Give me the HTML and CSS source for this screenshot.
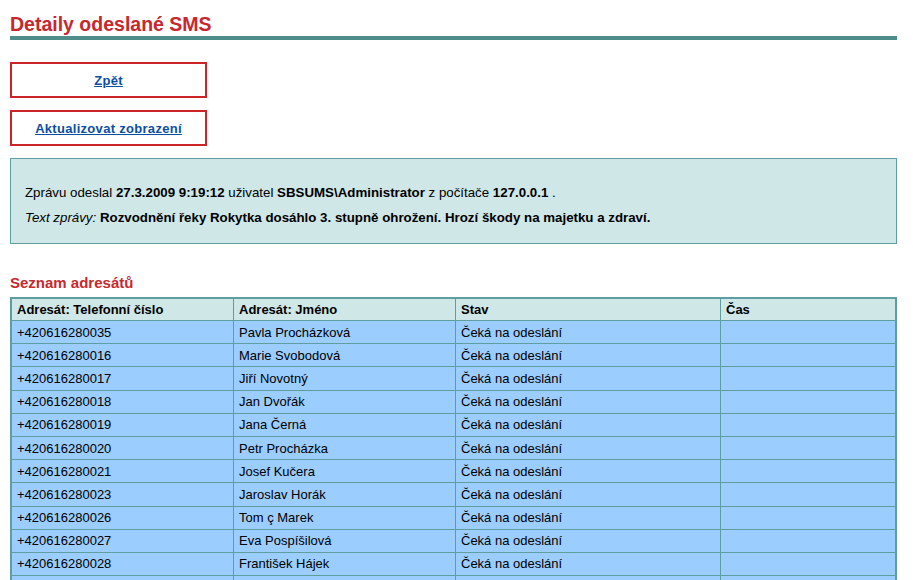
FILE: index.html
```html
<!DOCTYPE html>
<html lang="cs">
<head>
<meta charset="utf-8">
<title>Detaily odeslané SMS</title>
<link rel="stylesheet" href="styles.css">
</head>
<body>
<div class="page">
  <h1 class="title">Detaily odeslané SMS</h1>
  <div class="buttons">
    <div class="btn"><a href="#">Zpět</a></div>
    <div class="btn"><a href="#">Aktualizovat zobrazení</a></div>
  </div>
  <div class="info">
    <p>Zprávu odeslal <b>27.3.2009 9:19:12</b> uživatel <b>SBSUMS\Administrator</b> z počítače <b>127.0.0.1</b> .</p>
    <p><i>Text zprávy:</i> <b>Rozvodnění řeky Rokytka dosáhlo 3. stupně ohrožení. Hrozí škody na majetku a zdraví.</b></p>
  </div>
  <h2 class="subtitle">Seznam adresátů</h2>
  <table class="grid">
    <colgroup>
      <col class="c1"><col class="c2"><col class="c3"><col class="c4">
    </colgroup>
    <thead>
      <tr><th>Adresát: Telefonní číslo</th><th>Adresát: Jméno</th><th>Stav</th><th>Čas</th></tr>
    </thead>
    <tbody>
      <tr><td>+420616280035</td><td>Pavla Procházková</td><td>Čeká na odeslání</td><td></td></tr>
      <tr><td>+420616280016</td><td>Marie Svobodová</td><td>Čeká na odeslání</td><td></td></tr>
      <tr><td>+420616280017</td><td>Jiří Novotný</td><td>Čeká na odeslání</td><td></td></tr>
      <tr><td>+420616280018</td><td>Jan Dvořák</td><td>Čeká na odeslání</td><td></td></tr>
      <tr><td>+420616280019</td><td>Jana Černá</td><td>Čeká na odeslání</td><td></td></tr>
      <tr><td>+420616280020</td><td>Petr Procházka</td><td>Čeká na odeslání</td><td></td></tr>
      <tr><td>+420616280021</td><td>Josef Kučera</td><td>Čeká na odeslání</td><td></td></tr>
      <tr><td>+420616280023</td><td>Jaroslav Horák</td><td>Čeká na odeslání</td><td></td></tr>
      <tr><td>+420616280026</td><td>Tom ç Marek</td><td>Čeká na odeslání</td><td></td></tr>
      <tr><td>+420616280027</td><td>Eva Pospíšilová</td><td>Čeká na odeslání</td><td></td></tr>
      <tr><td>+420616280028</td><td>František Hájek</td><td>Čeká na odeslání</td><td></td></tr>
      <tr><td>+420616280029</td><td>Karel Veselý</td><td>Čeká na odeslání</td><td></td></tr>
    </tbody>
  </table>
</div>
</body>
</html>
```
FILE: styles.css
```css
html, body {
  margin: 0;
  padding: 0;
  background: #ffffff;
}
body {
  font-family: "Liberation Sans", Arial, sans-serif;
  color: #000000;
  overflow: hidden;
}
.page {
  width: 887px;
  margin-left: 10px;
}
.title {
  margin: 13px 0 0 0;
  font-size: 19.5px;
  line-height: 22px;
  font-weight: bold;
  color: #c8282d;
  padding-bottom: 1px;
  border-bottom: 4px solid #4f8d8c;
}
.buttons {
  display: flex;
  flex-direction: column;
  gap: 12px;
  margin-top: 22px;
}
.btn {
  width: 193px;
  height: 32px;
  border: 2px solid #cc2229;
  display: flex;
  align-items: center;
  justify-content: center;
}
.btn a {
  color: #0b4ea2;
  font-weight: bold;
  font-size: 13px;
  letter-spacing: 0.3px;
  text-decoration: underline;
}
.info {
  margin-top: 12px;
  background: #cfe7e7;
  border: 1px solid #5f9ea0;
  padding: 21px 14px 11px 14px;
  font-size: 13.3px;
  height: 52px;
}
.info p {
  margin: 0;
  line-height: 25px;
}
.subtitle {
  margin: 30px 0 5px 0;
  font-size: 15px;
  line-height: 18px;
  font-weight: bold;
  color: #c8282d;
}
.grid {
  width: 887px;
  border-collapse: separate;
  border-spacing: 0;
  table-layout: fixed;
  border: 2px solid #5f9ea0;
  font-size: 13px;
}
.grid col.c1 { width: 222px; }
.grid col.c2 { width: 222px; }
.grid col.c3 { width: 265px; }
.grid col.c4 { width: 174px; }
.grid th, .grid td {
  border: 0;
  border-right: 1px solid #5f9ea0;
  border-bottom: 1px solid #5f9ea0;
  padding: 0 5px;
  text-align: left;
  white-space: nowrap;
  height: 22.2px;
}
.grid th:last-child, .grid td:last-child {
  border-right: 0;
}
.grid th {
  background: #cfe7e7;
  font-weight: bold;
  height: 21px;
}
.grid td {
  background: #9ccdff;
}
```
